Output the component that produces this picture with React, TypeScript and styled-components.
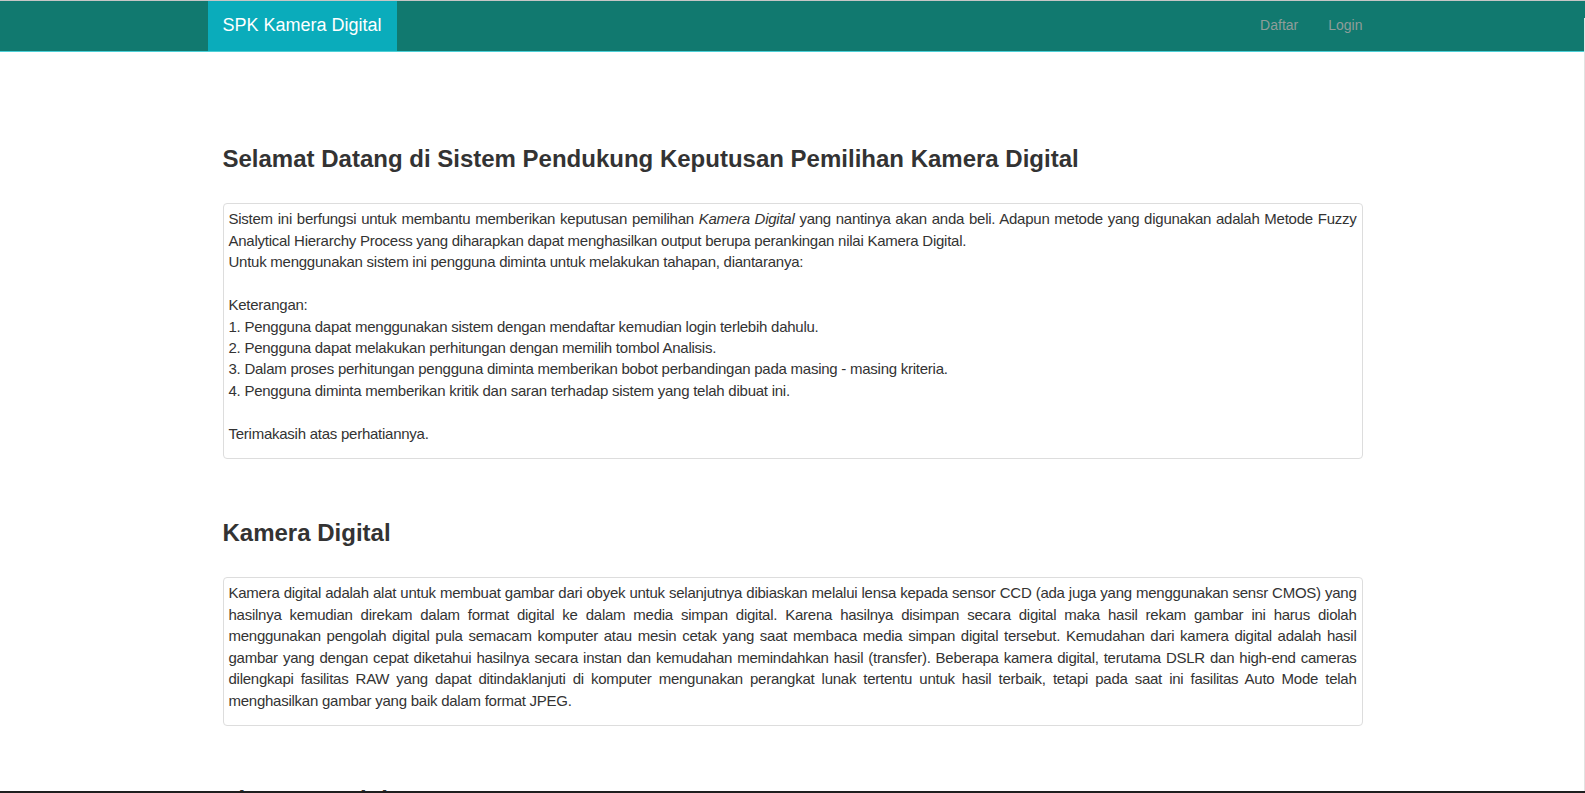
import React from "react";
import styled, { createGlobalStyle } from "styled-components";

const GlobalStyle = createGlobalStyle`
  html, body {
    margin: 0;
    padding: 0;
    background: #ffffff;
  }
  body {
    font-family: "Liberation Sans", Arial, Helvetica, sans-serif;
    font-size: 15px;
    line-height: 1.428571;
    color: #333333;
    overflow: hidden;
  }
  * { box-sizing: border-box; }
`;

const Page = styled.div`
  min-height: 793px;
  border-top: 1px solid #c6c6c6;
`;

const Navbar = styled.nav`
  background: #11796f;
  border-bottom: 1px solid #4cd0d7;
  height: 51px;
`;

const Container = styled.div`
  width: 1170px;
  margin: 0 auto;
  display: flex;
  align-items: stretch;
  justify-content: space-between;
  height: 100%;
`;

const Brand = styled.a`
  display: flex;
  align-items: center;
  height: 50px;
  padding: 0 15px;
  background: #0aacbb;
  color: #ffffff;
  font-size: 18px;
  text-decoration: none;
`;

const NavList = styled.ul`
  display: flex;
  list-style: none;
  margin: 0;
  padding: 0;
`;

const NavLink = styled.a`
  display: flex;
  align-items: center;
  height: 50px;
  padding: 0 15px;
  color: #8f9d9a;
  font-size: 14px;
  text-decoration: none;
`;

const Main = styled.main`
  width: 1170px;
  margin: 0 auto;
  padding: 94px 15px 0;
`;

const Section = styled.section`
  margin-bottom: 61px;
`;

const Heading = styled.h3`
  margin: 0 0 31px;
  font-size: 24px;
  line-height: 26.4px;
  font-weight: bold;
  color: #333333;
`;

const Panel = styled.div`
  border: 1px solid #dddddd;
  border-radius: 4px;
  padding: 4px 5px 4px;
`;

const Text = styled.p<{ $justify?: boolean }>`
  margin: 0 0 10px;
  letter-spacing: -0.25px;
  text-align: ${(p) => (p.$justify ? "justify" : "left")};
`;

const EdgeRight = styled.div`
  position: fixed;
  top: 18px;
  right: 0;
  bottom: 0;
  width: 1px;
  background: #e2e2e2;
`;

const EdgeBottom = styled.div`
  position: fixed;
  left: 0;
  right: 0;
  bottom: 0;
  height: 2px;
  background: #1f1f1f;
`;

export default function App() {
  return (
    <>
      <GlobalStyle />
      <Page>
        <Navbar>
          <Container>
            <Brand href="#">SPK Kamera Digital</Brand>
            <NavList>
              <li>
                <NavLink href="#">Daftar</NavLink>
              </li>
              <li>
                <NavLink href="#">Login</NavLink>
              </li>
            </NavList>
          </Container>
        </Navbar>
        <Main>
          <Section>
            <Heading>Selamat Datang di Sistem Pendukung Keputusan Pemilihan Kamera Digital</Heading>
            <Panel>
              <Text $justify>
                Sistem ini berfungsi untuk membantu memberikan keputusan pemilihan <em>Kamera Digital</em> yang
                nantinya akan anda beli. Adapun metode yang digunakan adalah Metode Fuzzy Analytical Hierarchy
                Process yang diharapkan dapat menghasilkan output berupa perankingan nilai Kamera Digital.
                <br />
                Untuk menggunakan sistem ini pengguna diminta untuk melakukan tahapan, diantaranya:
                <br />
                <br />
                Keterangan:
                <br />
                1. Pengguna dapat menggunakan sistem dengan mendaftar kemudian login terlebih dahulu.
                <br />
                2. Pengguna dapat melakukan perhitungan dengan memilih tombol Analisis.
                <br />
                3. Dalam proses perhitungan pengguna diminta memberikan bobot perbandingan pada masing - masing
                kriteria.
                <br />
                4. Pengguna diminta memberikan kritik dan saran terhadap sistem yang telah dibuat ini.
                <br />
                <br />
                Terimakasih atas perhatiannya.
              </Text>
            </Panel>
          </Section>
          <Section>
            <Heading>Kamera Digital</Heading>
            <Panel>
              <Text $justify>
                Kamera digital adalah alat untuk membuat gambar dari obyek untuk selanjutnya dibiaskan melalui lensa
                kepada sensor CCD (ada juga yang menggunakan sensr CMOS) yang hasilnya kemudian direkam dalam format
                digital ke dalam media simpan digital. Karena hasilnya disimpan secara digital maka hasil rekam
                gambar ini harus diolah menggunakan pengolah digital pula semacam komputer atau mesin cetak yang saat
                membaca media simpan digital tersebut. Kemudahan dari kamera digital adalah hasil gambar yang dengan
                cepat diketahui hasilnya secara instan dan kemudahan memindahkan hasil (transfer). Beberapa kamera
                digital, terutama DSLR dan high-end cameras dilengkapi fasilitas RAW yang dapat ditindaklanjuti di
                komputer mengunakan perangkat lunak tertentu untuk hasil terbaik, tetapi pada saat ini fasilitas Auto
                Mode telah menghasilkan gambar yang baik dalam format JPEG.
              </Text>
            </Panel>
          </Section>
          <Section>
            <Heading>Sistem Pendukung Keputusan</Heading>
            <Panel>
              <Text $justify>
                Sistem Pendukung Keputusan adalah sistem berbasis komputer yang membantu pengambil keputusan dalam
                memecahkan masalah semi terstruktur.
              </Text>
            </Panel>
          </Section>
        </Main>
        <EdgeRight />
        <EdgeBottom />
      </Page>
    </>
  );
}
